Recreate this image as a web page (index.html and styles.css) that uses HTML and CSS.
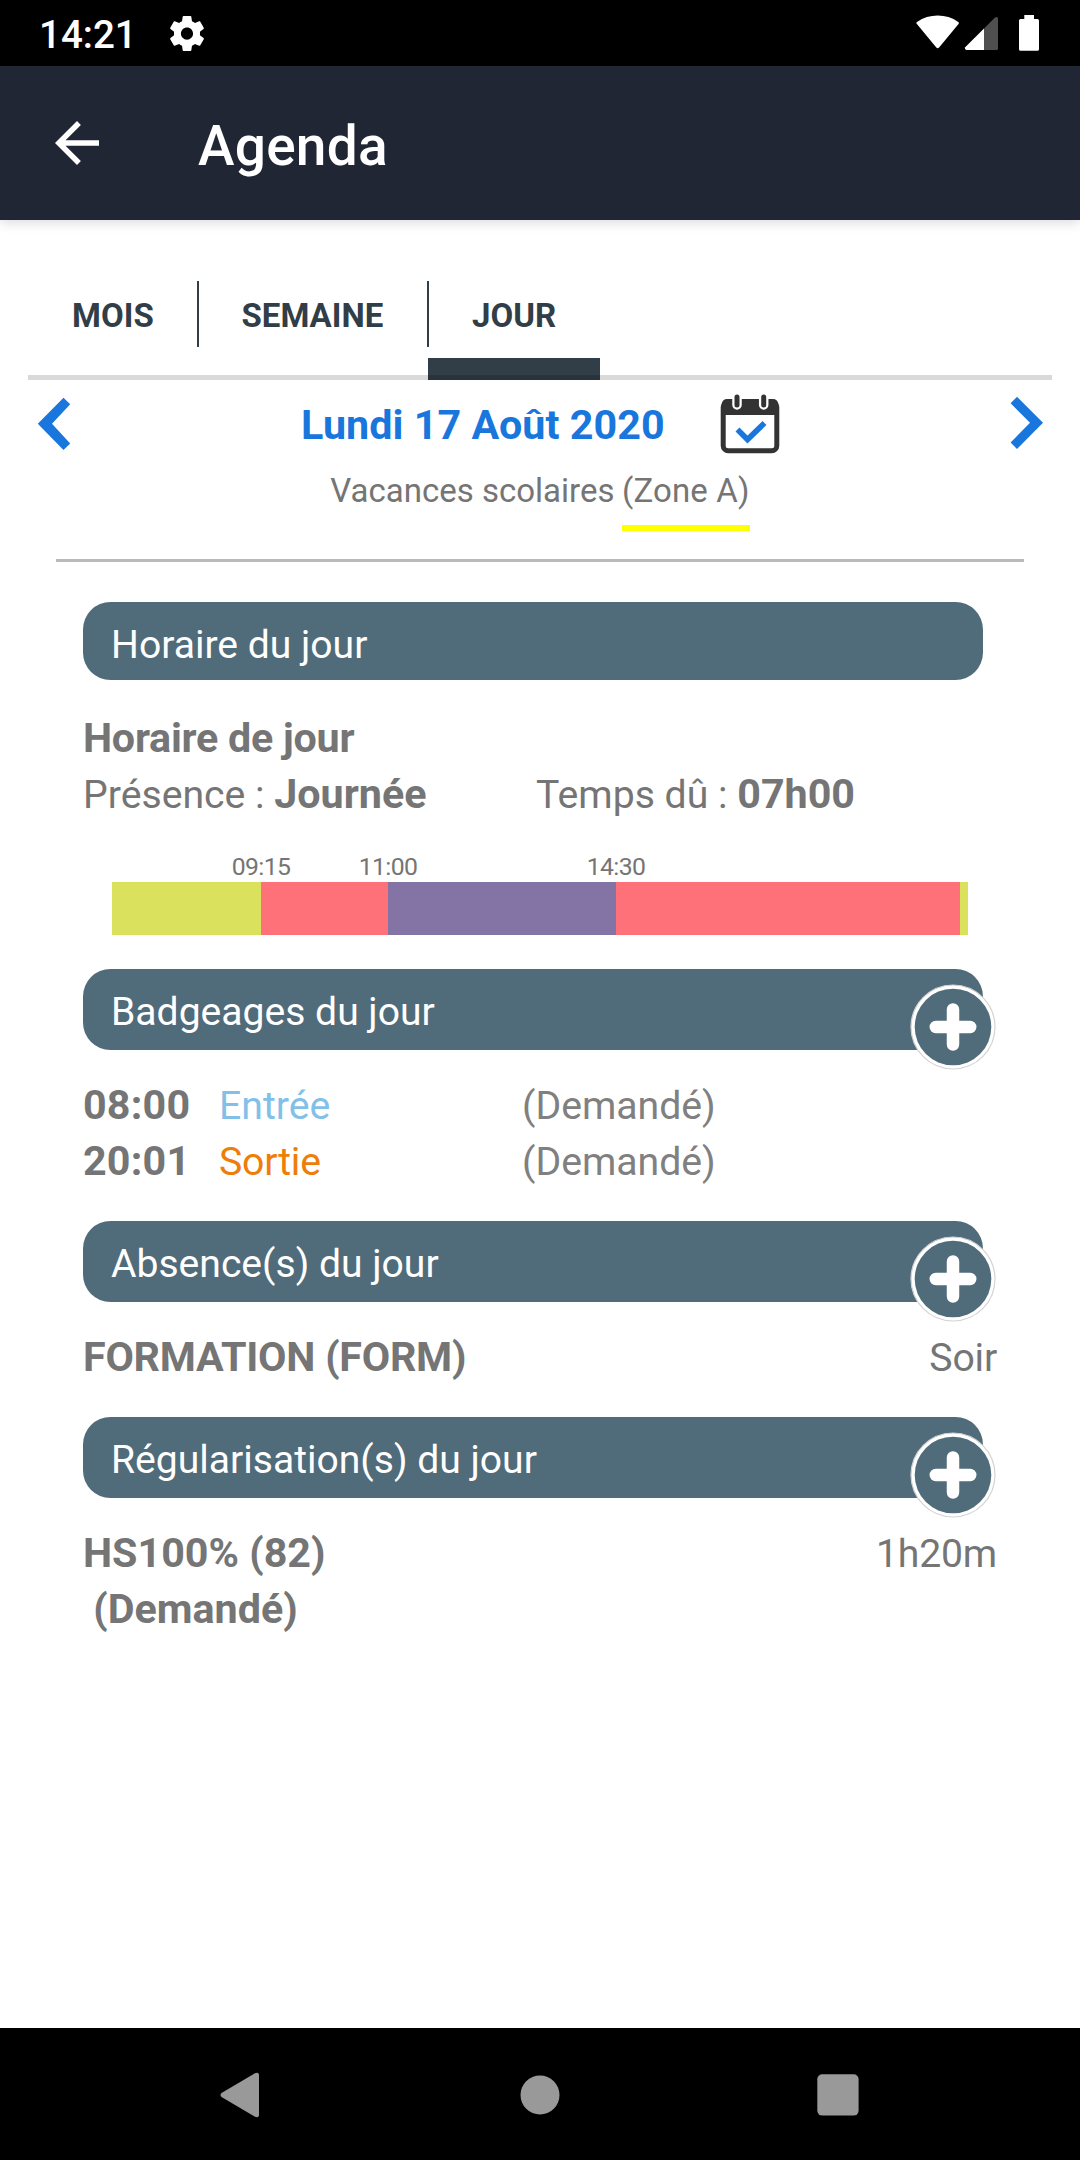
FILE: index.html
```html
<!DOCTYPE html>
<html lang="fr">
<head>
<meta charset="utf-8">
<title>Agenda</title>
<link rel="stylesheet" href="styles.css">
</head>
<body>
<div class="screen">
  <div class="status-bar">
    <span class="clock">14:21</span>
    <svg class="gear" viewBox="2.2 2 19.6 20" preserveAspectRatio="none"><path fill="#fff" d="M19.43 12.98c.04-.32.07-.64.07-.98s-.03-.66-.07-.98l2.11-1.65c.19-.15.24-.42.12-.64l-2-3.46c-.12-.22-.39-.3-.61-.22l-2.49 1c-.52-.4-1.08-.73-1.69-.98l-.38-2.65C14.46 2.18 14.25 2 14 2h-4c-.25 0-.46.18-.49.42l-.38 2.65c-.61.25-1.17.59-1.69.98l-2.49-1c-.23-.09-.49 0-.61.22l-2 3.46c-.13.22-.07.49.12.64l2.11 1.65c-.04.32-.07.65-.07.98s.03.66.07.98l-2.11 1.65c-.19.15-.24.42-.12.64l2 3.46c.12.22.39.3.61.22l2.49-1c.52.4 1.08.73 1.69.98l.38 2.65c.03.24.24.42.49.42h4c.25 0 .46-.18.49-.42l.38-2.65c.61-.25 1.17-.59 1.69-.98l2.49 1c.23.09.49 0 .61-.22l2-3.46c.12-.22.07-.49-.12-.64l-2.11-1.65zM12 15.5c-1.93 0-3.5-1.57-3.5-3.5s1.57-3.5 3.5-3.5 3.5 1.57 3.5 3.5-1.57 3.5-3.5 3.5z"/></svg>
    <svg class="indicators" width="124" height="36" viewBox="0 0 124 36">
      <path fill="#fff" d="M.9 9Q-.2 7.800 1 6.900Q10.500.6 21.700.6T42.300 6.900Q43.400 7.800 42.500 9L23.100 32.400Q21.700 34 20.300 32.400Z"/>
      <path fill="#fff" d="M68 13.500V35H50.500Q48.300 34.400 49.200 32.300Z"/>
      <path fill="#4f4f4f" d="M68 13.500L79 2.600Q81.400 1.200 82 3.500V33.400Q82 35 80.400 35H68Z"/>
      <path fill="#fff" d="M108.300 0H118V4H121.400Q123 4 123 5.600V34.200Q123 35.800 121.400 35.800H104.600Q103 35.800 103 34.200V5.600Q103 4 104.600 4H108.300Z"/>
    </svg>
  </div>

  <header class="app-bar">
    <svg width="66" height="66" viewBox="0 0 24 24"><path fill="#fff" d="M20 11H7.830l5.590-5.590L12 4l-8 8 8 8 1.410-1.410L7.830 13H20v-2z"/></svg>
    <h1 class="title">Agenda</h1>
  </header>

  <main class="content">
    <nav class="tabs">
      <div class="tab">MOIS</div>
      <div class="tab">SEMAINE</div>
      <div class="tab active">JOUR</div>
    </nav>

    <div class="day-nav">
      <svg class="prev" width="34" height="54" viewBox="0 0 34 54"><path fill="#1976dc" d="M26.500.8L33.200 7.200L15 26.800L33.200 46.500L26.500 53L.8 26.800Z"/></svg>
      <span class="date">Lundi 17 Août 2020</span>
      <svg class="calendar" width="60" height="60" viewBox="0 0 60 60">
        <rect x="3.200" y="8" width="53.600" height="48.700" rx="5" fill="#fff" stroke="#333" stroke-width="5"/>
        <path fill="#333" d="M2 21V9Q3 5 7 5H53Q57 5 58 9V21Z"/>
        <g stroke-linecap="round" fill="none"><path stroke="#fff" stroke-width="9.500" d="M17 4V11M43.700 4V11"/><path stroke="#333" stroke-width="5" d="M17 3V11M43.700 3V11"/></g>
        <path fill="none" stroke="#1976dc" stroke-width="5.600" d="M17.500 35.500L27.500 45.500L44.500 29"/>
      </svg>
      <svg class="next" width="34" height="54" viewBox="0 0 34 54"><path fill="#1976dc" d="M7 .8L.6 7.200L20 26.800L.6 46.500L7 53L33 26.800Z"/></svg>
    </div>

    <div class="holidays"><span>Vacances scolaires</span><span class="zone">(Zone A)</span></div>

    <section class="section schedule">
      <h2 class="banner short">Horaire du jour</h2>
      <div class="rows">
        <div class="row"><b class="tight">Horaire de jour</b></div>
        <div class="row"><span class="half">Présence : <b>Journée</b></span><span>Temps dû : <b>07h00</b></span></div>
      </div>
      <div class="timeline">
        <div class="seg off" style="width:149px"></div>
        <div class="seg flex" style="width:127px"><span class="mark">09:15</span></div>
        <div class="seg fixed" style="width:228px"><span class="mark">11:00</span></div>
        <div class="seg flex" style="width:344px"><span class="mark">14:30</span></div>
        <div class="seg off" style="width:8px"></div>
      </div>
    </section>

    <section class="section badges">
      <h2 class="banner">Badgeages du jour<svg class="add" viewBox="0 0 86 86"><circle cx="43" cy="43" r="42" fill="#fff" stroke="#d5d2d2" stroke-width="1.200"/><circle cx="43" cy="43" r="38.300" fill="#506b79"/><path stroke="#fff" stroke-width="12.500" stroke-linecap="round" d="M43 25.500V60.500M25.800 43H60.200"/></svg></h2>
      <div class="rows">
        <div class="row"><b class="time">08:00</b><span class="kind in">Entrée</span><span class="state">(Demandé)</span></div>
        <div class="row"><b class="time">20:01</b><span class="kind out">Sortie</span><span class="state">(Demandé)</span></div>
      </div>
    </section>

    <section class="section absences">
      <h2 class="banner">Absence(s) du jour<svg class="add" viewBox="0 0 86 86"><circle cx="43" cy="43" r="42" fill="#fff" stroke="#d5d2d2" stroke-width="1.200"/><circle cx="43" cy="43" r="38.300" fill="#506b79"/><path stroke="#fff" stroke-width="12.500" stroke-linecap="round" d="M43 25.500V60.500M25.800 43H60.200"/></svg></h2>
      <div class="rows">
        <div class="row between"><b class="tight">FORMATION (FORM)</b><span>Soir</span></div>
      </div>
    </section>

    <section class="section">
      <h2 class="banner">Régularisation(s) du jour<svg class="add" viewBox="0 0 86 86"><circle cx="43" cy="43" r="42" fill="#fff" stroke="#d5d2d2" stroke-width="1.200"/><circle cx="43" cy="43" r="38.300" fill="#506b79"/><path stroke="#fff" stroke-width="12.500" stroke-linecap="round" d="M43 25.500V60.500M25.800 43H60.200"/></svg></h2>
      <div class="rows">
        <div class="row between"><b>HS100% (82)</b><span>1h20m</span></div>
        <div class="row"><b>&nbsp;(Demandé)</b></div>
      </div>
    </section>
  </main>

  <footer class="system-nav">
    <svg width="40" height="46" viewBox="0 0 40 46"><path fill="#999" d="M1.500 21L35 1.200Q39 -.4 39 3.500V42.500Q39 46.400 35 44.800L1.500 25Q-.5 23 1.500 21Z"/></svg>
    <svg class="home" width="40" height="40" viewBox="0 0 40 40"><circle cx="20" cy="20" r="19.500" fill="#999"/></svg>
    <svg width="42" height="42" viewBox="0 0 42 42"><rect x=".3" y=".3" width="41.300" height="41.300" rx="5" fill="#999"/></svg>
  </footer>
</div>
</body>
</html>
```

FILE: styles.css
```css
* { box-sizing: border-box; }

body {
  margin: 0;
  font-family: Roboto, sans-serif;
  color: #757575;
  background: #fff;
}

svg { display: block; flex: none; }

.screen {
  width: 1080px;
  height: 2160px;
  display: flex;
  flex-direction: column;
  overflow: hidden;
}

.status-bar {
  height: 66px;
  padding: 0 40px 0 39px;
  display: flex;
  align-items: center;
  background: #000;
  color: #fff;
}
.clock {
  width: 131px;
  font-size: 38.5px;
  font-weight: 500;
  line-height: 66px;
  padding-top: 3px;
}
.gear { width: 34px; height: 35px; }
.indicators { margin-left: auto; }

.app-bar {
  height: 154px;
  flex: none;
  padding-left: 44px;
  display: flex;
  align-items: center;
  gap: 88px;
  background: #212635;
  box-shadow: 0 2px 12px rgba(0, 0, 0, .16);
}
.title {
  margin: 0;
  padding-top: 6px;
  font-size: 55px;
  line-height: 64px;
  font-weight: 500;
  letter-spacing: .25px;
  color: #fff;
}

.content { flex: 1; }

.tabs {
  height: 99px;
  margin: 61px 28px 0;
  display: flex;
  position: relative;
  color: #313d47;
}
.tabs::after {
  content: "";
  position: absolute;
  left: 0;
  right: 0;
  bottom: 0;
  height: 5px;
  background: rgba(0, 0, 0, .15);
}
.tab {
  padding: 0 42.5px;
  font-size: 33px;
  font-weight: 700;
  line-height: 69px;
  border-left: 2px solid;
  border-image: linear-gradient(#313d47 66px, transparent 66px) 0 0 0 2;
}
.tab:first-child { border: 0; padding-left: 44px; width: 169px; letter-spacing: .1px; }
.tab:nth-child(2) { width: 230px; }
.tab.active {
  width: 173px;
  padding-left: 43px;
  background: linear-gradient(#313d47, #313d47) right bottom / 172px 22px no-repeat border-box;
}

.day-nav {
  height: 80px;
  padding: 16px 36px 0 37px;
  display: flex;
  align-items: flex-start;
}
.prev { margin-top: 1px; }
.date {
  width: 418.5px;
  margin-left: 230px;
  font-size: 41.25px;
  font-weight: 700;
  letter-spacing: .05px;
  line-height: 58px;
  color: #1976dc;
}
.calendar { margin-top: -2px; }
.next { margin: 0 0 0 auto; }

.holidays {
  height: 102px;
  margin: 0 56px;
  display: flex;
  justify-content: center;
  gap: 7.5px;
  border-bottom: 3px solid #bababa;
  font-size: 33px;
  line-height: 62px;
}
.zone { height: 71px; letter-spacing: .15px; border-bottom: 6px solid #ff0; }

.section {
  margin-left: 83px;
  width: 914px;
  font-size: 39.2px;
  line-height: 56px;
}
.schedule { margin-top: 40px; height: 367px; }
.badges { height: 252px; }
.absences { height: 196px; }

.banner {
  position: relative;
  margin: 0;
  width: 900px;
  height: 81px;
  padding: 14.5px 28px 0;
  border-radius: 27.5px;
  background: #506b79;
  color: #fff;
  font-size: 39.1px;
  font-weight: 400;
}
.banner.short { height: 78px; }
.add {
  position: absolute;
  right: -12.5px;
  top: 14.5px;
  width: 86px;
  height: 86px;
}

.rows { padding-top: 27px; }
.schedule .rows { padding-top: 30px; }
.row {
  display: flex;
  align-items: baseline;
  height: 56px;
}
.half { width: 453px; }
.row b { font-size: 41.25px; font-weight: 700; line-height: 56px; }
.row .tight { letter-spacing: -.25px; }
.row .time { width: 136px; letter-spacing: .2px; }
.kind { width: 303px; }
.in { color: #83c0e8; }
.out { color: #ee7d0a; letter-spacing: -.2px; }
.state { color: #808080; }
.between { justify-content: space-between; }
.between span { letter-spacing: -.2px; }

.timeline {
  margin: 60px 0 0 29px;
  height: 53px;
  display: flex;
}
.seg { position: relative; }
.off { background: #dae15c; }
.flex { background: #ff7179; }
.fixed { background: #8474a5; }
.mark {
  position: absolute;
  left: 0;
  bottom: 53px;
  transform: translateX(-50%);
  font-size: 24.75px;
  letter-spacing: -.6px;
  line-height: 30px;
}

.system-nav {
  height: 132px;
  flex: none;
  padding: 1px 221px 0 220px;
  display: flex;
  align-items: center;
  justify-content: space-between;
  background: #000;
}
.home { margin-left: 2px; }
```
